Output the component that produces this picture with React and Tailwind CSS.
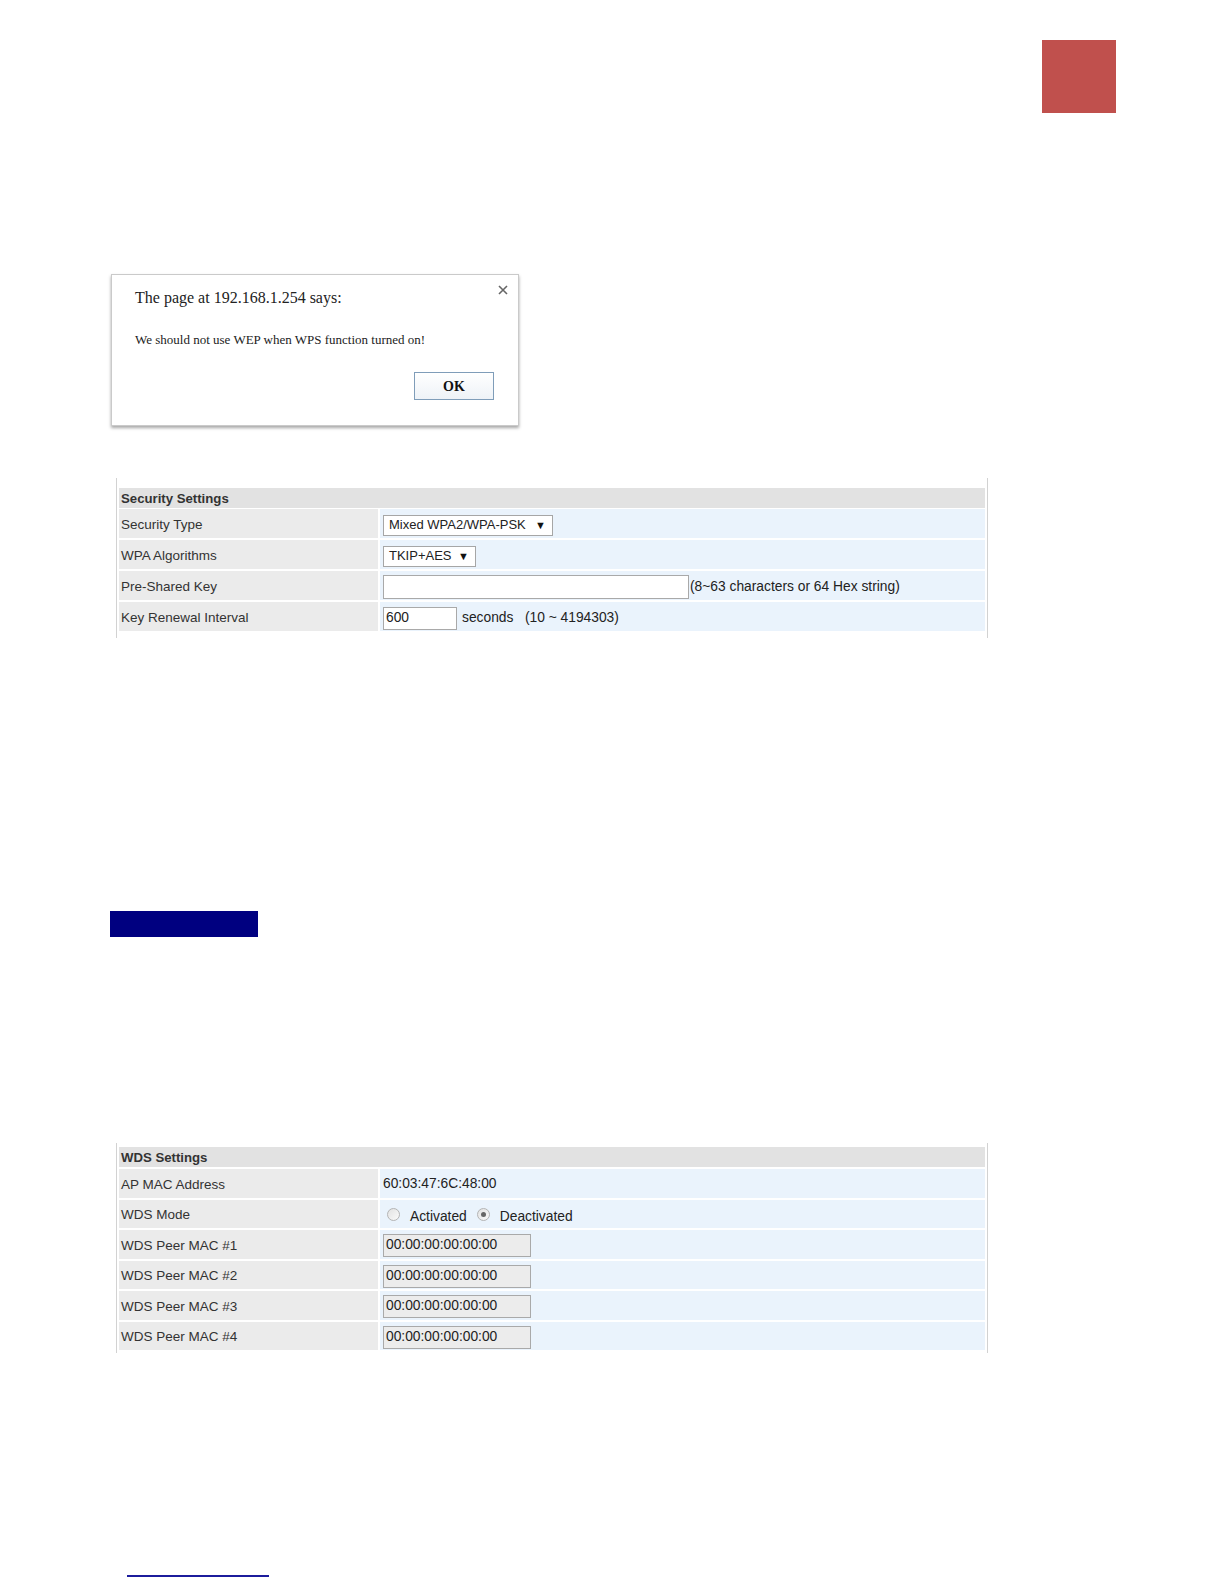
import React from "react"

const sans = { fontFamily: '"Liberation Sans", Arial, sans-serif' }

function Row({ label, children, h = "h-[29px]" }) {
    return (
        <div className={`grid grid-cols-[259px_1fr] gap-x-[2px] ${h}`}>
            <div className="flex items-center bg-[#ebebeb] pl-[2px] pt-[3px] text-[13.5px] text-[#333]">{label}</div>
            <div className="flex items-center bg-[#eaf3fc] pl-[3px] pt-[3px] text-[13.8px] text-[#222]">{children}</div>
        </div>
    )
}

function Header({ title }) {
    return (
        <div className="flex h-[20px] items-center bg-[#e2e2e2] pl-[2px] pt-[1px] text-[13.2px] font-bold text-[#333]">
            {title}
        </div>
    )
}

function Select({ value, width }) {
    return (
        <div className={`flex h-[21px] items-center justify-between border border-[#a6a6a6] bg-white pl-[5px] pr-[6px] text-[13px] ${width}`}>
            <span>{value}</span>
            <span className="text-[11px] leading-none text-[#111]">▼</span>
        </div>
    )
}

function Radio({ checked }) {
    return (
        <span className="mt-[3px] flex h-[13px] w-[13px] items-center justify-center rounded-full border border-[#b4b4b4] bg-gradient-to-br from-[#e2e2e2] to-[#fafafa]">
            {checked && <span className="h-[5px] w-[5px] rounded-full bg-[#666]" />}
        </span>
    )
}

function MacInput() {
    return (
        <div className="flex h-[23px] w-[148px] items-center border border-[#a9a9a9] bg-[#ececec] pl-[2px] text-[13.8px] text-[#222]">
            00:00:00:00:00:00
        </div>
    )
}

export default function App() {
    return (
        <div className="min-h-[1584px] w-[1224px] bg-white pt-[40px]" style={sans}>
            <div className="flex justify-end pr-[108px]">
                <div className="h-[73px] w-[74px] bg-[#c0504d]" />
            </div>

            {/* alert dialog */}
            <div
                className="relative ml-[111px] mt-[161px] flex h-[152px] w-[408px] flex-col border border-[#cacaca] bg-white pl-[23px] pr-[24px] pt-[13px] shadow-[0_2px_3px_rgba(0,0,0,0.35)]"
                style={{ fontFamily: '"Liberation Serif", "Times New Roman", serif' }}
            >
                <div className="text-[16px] leading-[20px] text-[#222]">The page at 192.168.1.254 says:</div>
                <svg className="absolute right-[10px] top-[10px]" width="10" height="10" viewBox="0 0 10 10">
                    <path d="M1 1L9 9M9 1L1 9" stroke="#666" strokeWidth="1.6" />
                </svg>
                <div className="mt-[24px] text-[13px] leading-[16px] text-[#222]">
                    We should not use WEP when WPS function turned on!
                </div>
                <div className="mt-[24px] flex justify-end">
                    <div className="flex h-[28px] w-[80px] items-center justify-center border border-[#7f9db9] bg-gradient-to-b from-white to-[#eef2f7] text-[14px] font-bold text-[#111]">
                        OK
                    </div>
                </div>
            </div>

            {/* security settings */}
            <div className="ml-[116px] mt-[52px] w-[872px] border-x border-[#d2d2d2] px-[2px] pb-[7px] pt-[10px]">
                <Header title="Security Settings" />
                <div className="mt-[1px] flex flex-col gap-[2px]">
                    <Row label="Security Type">
                        <Select value="Mixed WPA2/WPA-PSK" width="w-[170px]" />
                    </Row>
                    <Row label="WPA Algorithms">
                        <Select value="TKIP+AES" width="w-[93px]" />
                    </Row>
                    <Row label="Pre-Shared Key">
                        <div className="h-[24px] w-[306px] border border-[#a9a9a9] bg-white" />
                        <span className="ml-px">(8~63 characters or 64 Hex string)</span>
                    </Row>
                    <Row label="Key Renewal Interval">
                        <div className="flex h-[23px] w-[74px] items-center border border-[#a9a9a9] bg-white pl-[2px]">600</div>
                        <span className="ml-[5px] whitespace-pre">seconds   (10 ~ 4194303)</span>
                    </Row>
                </div>
            </div>

            <div className="ml-[110px] mt-[273px] h-[26px] w-[148px] bg-[#000080]" />

            {/* wds settings */}
            <div className="ml-[116px] mt-[206px] w-[872px] border-x border-[#d2d2d2] px-[2px] pb-[3px] pt-[4px]">
                <Header title="WDS Settings" />
                <div className="mt-[2px] flex flex-col gap-[2px]">
                    <Row label="AP MAC Address" h="h-[28.5px]">60:03:47:6C:48:00</Row>
                    <Row label="WDS Mode" h="h-[28.5px]">
                        <div className="ml-[4px] flex h-[20px] items-start">
                            <Radio />
                            <span className="ml-[10px] mt-[4px] leading-[16px]">Activated</span>
                            <span className="ml-[10px]"><Radio checked /></span>
                            <span className="ml-[10px] mt-[4px] leading-[16px]">Deactivated</span>
                        </div>
                    </Row>
                    <Row label="WDS Peer MAC #1" h="h-[28.5px]"><MacInput /></Row>
                    <Row label="WDS Peer MAC #2" h="h-[28.5px]"><MacInput /></Row>
                    <Row label="WDS Peer MAC #3" h="h-[28.5px]"><MacInput /></Row>
                    <Row label="WDS Peer MAC #4" h="h-[28.5px]"><MacInput /></Row>
                </div>
            </div>

            <div className="ml-[127px] mt-[222px] h-[2px] w-[142px] bg-[#1c1c9c]" />
        </div>
    )
}
